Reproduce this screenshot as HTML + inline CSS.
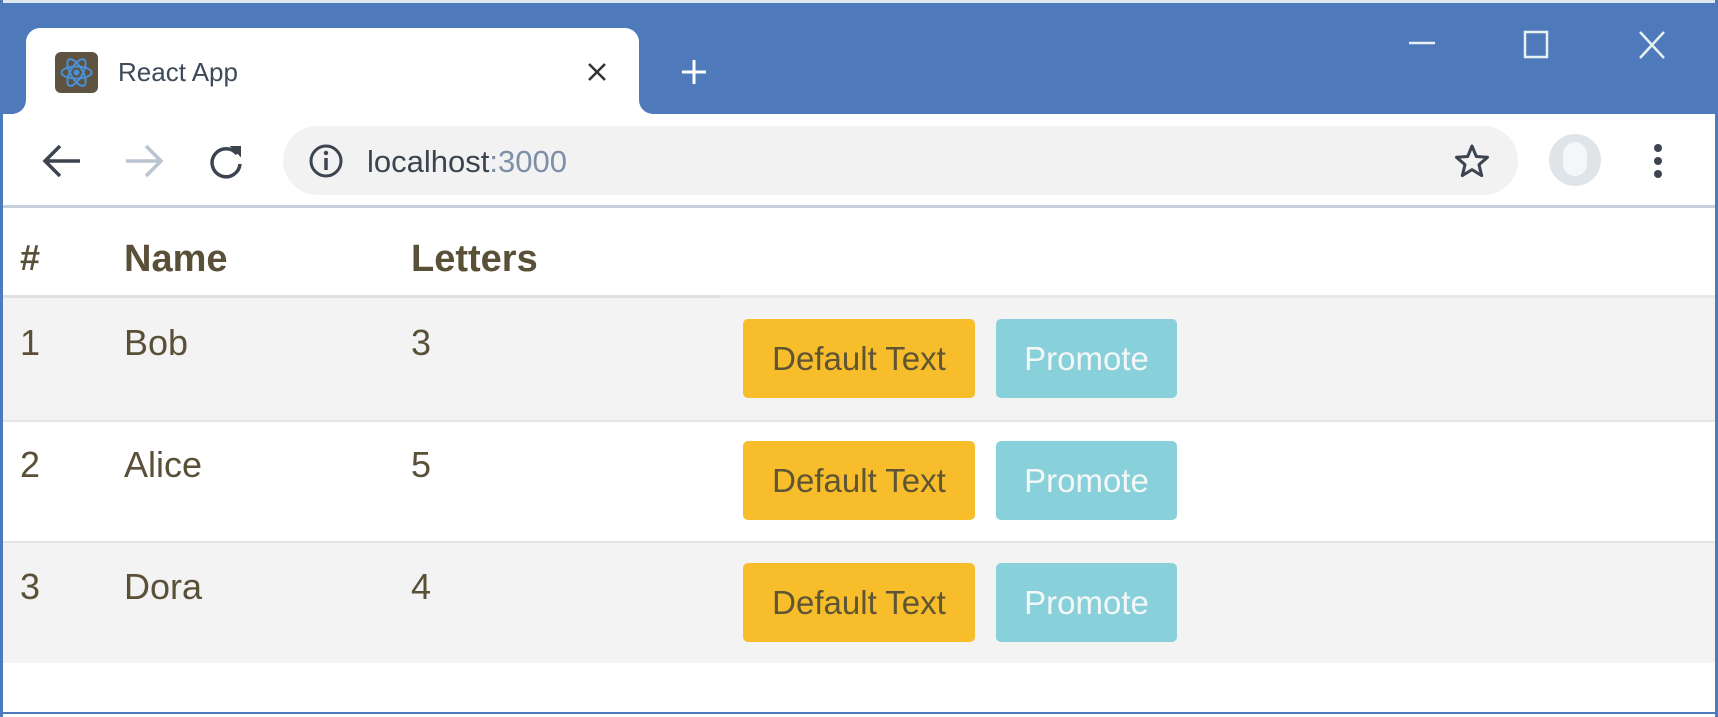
<!DOCTYPE html>
<html><head><meta charset="utf-8"><style>
*{margin:0;padding:0;box-sizing:border-box}
body{width:1718px;height:717px;position:relative;overflow:hidden;background:#fff;font-family:"Liberation Sans",sans-serif}
.a{position:absolute}
.t{position:absolute;color:#5a5038;white-space:nowrap;line-height:1}
.btn{position:absolute;height:79px;border-radius:5px;font-size:33px;display:flex;align-items:center;justify-content:center}
.y{left:743px;width:232px;background:#f7bd2b;color:#5f5535}
.c{left:996px;width:181px;background:#88d0da;color:#f4f7f7}
</style></head><body>
<div class="a" style="left:0;top:0;width:1718px;height:114px;background:#4e79bb"></div>
<div class="a" style="left:14px;top:100px;width:640px;height:14px;background:#fff"></div>
<div class="a" style="left:2px;top:90px;width:24px;height:24px;background:#4e79bb;border-radius:0 0 14px 0"></div>
<div class="a" style="left:639px;top:90px;width:24px;height:24px;background:#4e79bb;border-radius:0 0 0 14px"></div>
<div class="a" style="left:26px;top:28px;width:613px;height:90px;background:#fff;border-radius:14px 14px 0 0"></div>
<div class="a" style="left:0;top:0;width:1718px;height:3px;background:#dfe6ef"></div>
<div class="a" style="left:55px;top:52px;width:43px;height:41px;background:#5e5340;border-radius:6px"></div>
<svg class="a" style="left:55px;top:52px" width="43" height="41" viewBox="0 0 43 41"><g fill="none" stroke="#4a90d8" stroke-width="2"><ellipse cx="21.5" cy="20.5" rx="15" ry="6"/><ellipse cx="21.5" cy="20.5" rx="15" ry="6" transform="rotate(60 21.5 20.5)"/><ellipse cx="21.5" cy="20.5" rx="15" ry="6" transform="rotate(-60 21.5 20.5)"/></g><circle cx="21.5" cy="20.5" r="3" fill="#4a90d8"/></svg>
<div class="t" style="left:118px;top:59px;font-size:26px;color:#3c4a5a">React App</div>
<svg class="a" style="left:586px;top:61px" width="22" height="22"><path d="M3 3L19 19M19 3L3 19" stroke="#333" stroke-width="2.5"/></svg>
<svg class="a" style="left:680px;top:58px" width="28" height="28"><path d="M14 2V26M2 14H26" stroke="#fff" stroke-width="3"/></svg>
<svg class="a" style="left:1408px;top:38px" width="28" height="10"><path d="M1 5H27" stroke="#e8f2f2" stroke-width="2.5"/></svg>
<svg class="a" style="left:1523px;top:30px" width="26" height="30"><rect x="2" y="2" width="22" height="25" fill="none" stroke="#e8f2f2" stroke-width="2.5"/></svg>
<svg class="a" style="left:1637px;top:30px" width="30" height="30"><path d="M3 2L27 28M27 2L3 28" stroke="#e8f2f2" stroke-width="2.5"/></svg>
<div class="a" style="left:283px;top:126px;width:1235px;height:69px;background:#f2f2f2;border-radius:35px"></div>
<svg class="a" style="left:40px;top:143px" width="42" height="36"><path d="M40 18H5M20 3L5 18L20 33" fill="none" stroke="#3c4450" stroke-width="3.5"/></svg>
<svg class="a" style="left:124px;top:143px" width="42" height="36"><path d="M2 18H37M22 3L37 18L22 33" fill="none" stroke="#b8c4d0" stroke-width="3.5"/></svg>
<svg class="a" style="left:206px;top:142px" width="40" height="40"><path d="M31 12A14 14 0 1 0 34 22" fill="none" stroke="#3c4450" stroke-width="3.5"/><path d="M26 5H34V13Z" fill="#3c4450" stroke="#3c4450" stroke-width="2"/></svg>
<svg class="a" style="left:308px;top:143px" width="36" height="36"><circle cx="18" cy="18" r="15" fill="none" stroke="#3c4450" stroke-width="3"/><path d="M18 15V27" stroke="#3c4450" stroke-width="3.5"/><circle cx="18" cy="10" r="2.2" fill="#3c4450"/></svg>
<div class="t" style="left:367px;top:146px;font-size:31px;color:#3c4450">localhost<span style="color:#7e90a8">:3000</span></div>
<svg class="a" style="left:1454px;top:143px" width="36" height="36"><path d="M18 3L22.3 13.5L33.5 14.3L25 21.6L27.7 32.6L18 26.6L8.3 32.6L11 21.6L2.5 14.3L13.7 13.5Z" fill="none" stroke="#3c4450" stroke-width="3" stroke-linejoin="round"/></svg>
<div class="a" style="left:1549px;top:134px;width:52px;height:52px;border-radius:50%;background:#dfe4e8"></div>
<div class="a" style="left:1563px;top:142px;width:24px;height:34px;border-radius:12px;background:#f4f6f7"></div>
<div class="a" style="left:1654px;top:144px;width:8px;height:8px;border-radius:50%;background:#3c4450"></div>
<div class="a" style="left:1654px;top:157px;width:8px;height:8px;border-radius:50%;background:#3c4450"></div>
<div class="a" style="left:1654px;top:170px;width:8px;height:8px;border-radius:50%;background:#3c4450"></div>
<div class="a" style="left:0;top:205px;width:1718px;height:3px;background:#c6d0da"></div>
<div class="t" style="left:20px;top:240px;font-size:36px;font-weight:bold">#</div>
<div class="t" style="left:124px;top:240px;font-size:38px;font-weight:bold">Name</div>
<div class="t" style="left:411px;top:240px;font-size:38px;font-weight:bold">Letters</div>
<div class="a" style="left:0;top:295px;width:1718px;height:3px;background:#e8eaea"></div>
<div class="a" style="left:0;top:295px;width:720px;height:3px;background:#dde1e1"></div>
<div class="a" style="left:0;top:298px;width:1718px;height:122px;background:#f3f3f3"></div>
<div class="a" style="left:0;top:420px;width:1718px;height:2px;background:#e4e6e6"></div>
<div class="a" style="left:0;top:541px;width:1718px;height:2px;background:#e4e6e6"></div>
<div class="a" style="left:0;top:543px;width:1718px;height:120px;background:#f3f3f3"></div>
<div class="t" style="left:20px;top:325px;font-size:36px">1</div>
<div class="t" style="left:124px;top:325px;font-size:36px">Bob</div>
<div class="t" style="left:411px;top:325px;font-size:36px">3</div>
<div class="btn y" style="top:319px">Default Text</div><div class="btn c" style="top:319px">Promote</div>
<div class="t" style="left:20px;top:447px;font-size:36px">2</div>
<div class="t" style="left:124px;top:447px;font-size:36px">Alice</div>
<div class="t" style="left:411px;top:447px;font-size:36px">5</div>
<div class="btn y" style="top:441px">Default Text</div><div class="btn c" style="top:441px">Promote</div>
<div class="t" style="left:20px;top:569px;font-size:36px">3</div>
<div class="t" style="left:124px;top:569px;font-size:36px">Dora</div>
<div class="t" style="left:411px;top:569px;font-size:36px">4</div>
<div class="btn y" style="top:563px">Default Text</div><div class="btn c" style="top:563px">Promote</div>
<div class="a" style="left:0;top:0;width:3px;height:717px;background:#4e79bb"></div>
<div class="a" style="right:0;top:0;width:3px;height:717px;background:#4e79bb"></div>
<div class="a" style="left:0;bottom:3px;width:1718px;height:2px;background:#4e79bb"></div>
</body></html>
